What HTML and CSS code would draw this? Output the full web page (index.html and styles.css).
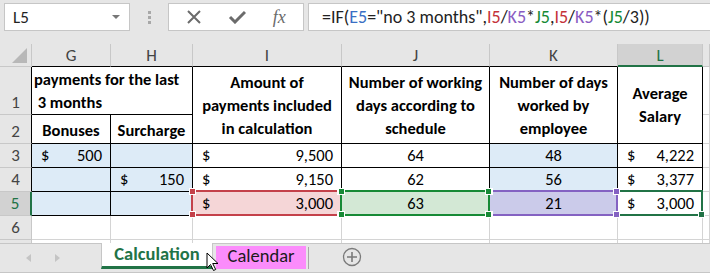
FILE: index.html
```html
<!DOCTYPE html>
<html lang="en">
<head>
  <meta charset="UTF-8" />
  <title>Average salary</title>
  <link rel="stylesheet" href="styles.css">
</head>
<body>

  <!-- formula bar -->
  <div class="toolbar">
    <div class="namebox">
      <span>L5</span>
      <svg class="dd" width="8" height="5" viewBox="0 0 8 5"><path d="M0 0h8L4 4z" fill="#777"/></svg>
    </div>
    <div class="grip"><i></i><i></i><i></i></div>
    <div class="fbtns">
      <svg width="16" height="16" viewBox="0 0 16 16"><path d="M2 2l12 12M14 2L2 14" stroke="#6b6b6b" stroke-width="2" fill="none"/></svg>
      <svg width="18" height="14" viewBox="0 0 18 14"><path d="M2 7l5 5L17 2" stroke="#6b6b6b" stroke-width="3" fill="none"/></svg>
      <span class="fx">fx</span>
    </div>
    <div class="finput">=IF(<span class="r-e">E5</span>="no 3 months",<span class="r-i">I5</span>/<span class="r-k">K5</span>*<span class="r-j">J5</span>,<span class="r-i">I5</span>/<span class="r-k">K5</span>*(<span class="r-j">J5</span>/3))</div>
  </div>

  <!-- sheet grid -->
  <div class="sheet">
    <div class="hd corner"><svg width="32" height="23" viewBox="0 0 32 23"><path d="M12 19L27 4v15z" fill="#b8b8b8"/></svg></div>
    <div class="hd col top">G</div>
    <div class="hd col top">H</div>
    <div class="hd col top">I</div>
    <div class="hd col top">J</div>
    <div class="hd col top">K</div>
    <div class="hd col on">L</div>
    <div class="hd col"></div>

    <div class="hd row edge">1</div>
    <div class="d span2 lines left-text">payments for the last<br>&nbsp;3 months</div>
    <div class="d tall title">Amount of<br>payments included<br>in calculation</div>
    <div class="d tall title">Number of working<br>days according to<br>schedule</div>
    <div class="d tall title">Number of days<br>worked by<br>employee</div>
    <div class="d tall title">Average<br>Salary</div>
    <div class="c"></div>

    <div class="hd row edge">2</div>
    <div class="d title low">Bonuses</div>
    <div class="d title low">Surcharge</div>
    <div class="c"></div>

    <div class="hd row edge">3</div>
    <div class="d blue acc"><span>$</span><span>500</span></div>
    <div class="d blue"></div>
    <div class="d acc"><span>$</span><span>9,500</span></div>
    <div class="d num">64</div>
    <div class="d blue num">48</div>
    <div class="d acc"><span>$</span><span>4,222</span></div>
    <div class="c"></div>

    <div class="hd row edge">4</div>
    <div class="d blue"></div>
    <div class="d blue acc"><span>$</span><span>150</span></div>
    <div class="d acc"><span>$</span><span>9,150</span></div>
    <div class="d num">62</div>
    <div class="d blue num">56</div>
    <div class="d acc"><span>$</span><span>3,377</span></div>
    <div class="c"></div>

    <div class="hd row edge on">5</div>
    <div class="d blue"></div>
    <div class="d blue"></div>
    <div class="d pink acc sel"><span>$</span><span>3,000</span>
      <b class="rng red"><i class="tl"></i><i class="tr"></i><i class="bl"></i><i class="br"></i></b>
    </div>
    <div class="d mint num sel">63
      <b class="rng green"><i class="tl"></i><i class="tr"></i><i class="bl"></i><i class="br"></i></b>
    </div>
    <div class="d lilac num sel">21
      <b class="rng purple"><i class="tl"></i><i class="tr"></i><i class="bl"></i><i class="br"></i></b>
    </div>
    <div class="d acc sel"><span>$</span><span>3,000</span>
      <b class="rng active"><i class="br"></i></b>
    </div>
    <div class="c"></div>

    <div class="hd row">6</div>
    <div class="c"></div>
    <div class="c"></div>
    <div class="c"></div>
    <div class="c"></div>
    <div class="c"></div>
    <div class="c"></div>
    <div class="c"></div>

    <div class="hd row"></div>
    <div class="c"></div>
    <div class="c"></div>
    <div class="c"></div>
    <div class="c"></div>
    <div class="c"></div>
    <div class="c"></div>
    <div class="c"></div>
  </div>

  <!-- sheet tabs -->
  <div class="tabbar">
    <div class="arrows">
      <svg width="6" height="8" viewBox="0 0 6 8"><path d="M5 0v8L0 4z" fill="#c4c4c4"/></svg>
      <svg width="6" height="8" viewBox="0 0 6 8"><path d="M1 0v8l5-4z" fill="#c4c4c4"/></svg>
    </div>
    <div class="tab active">Calculation</div>
    <div class="tab pinktab">Calendar</div>
    <div class="tabsep"></div>
    <svg class="addsheet" width="20" height="20" viewBox="0 0 20 20">
      <circle cx="10" cy="10" r="8.5" stroke="#7a7a7a" stroke-width="1.3" fill="none"/>
      <path d="M10 5v10M5 10h10" stroke="#7a7a7a" stroke-width="1.6"/>
    </svg>
    <svg class="cursor" width="13" height="20" viewBox="0 0 13 20">
      <path d="M1 1v15l3.5-3.5 3 6 2.2-1-3-6H12z" fill="#fff" stroke="#000" stroke-width="1"/>
    </svg>
  </div>

</body>
</html>
```

FILE: styles.css
```css
body {
  margin: 0;
  width: 710px;
  height: 275px;
  overflow: hidden;
  background: #fff;
  font-family: Carlito, Lato, "Liberation Sans", sans-serif;
  font-size: 16.5px;
  color: #000;
}

/* formula bar */
.toolbar {
  display: flex;
  align-items: flex-start;
  height: 44px;
  padding-top: 3px;
  box-sizing: border-box;
  background: #e6e6e6;
}

.namebox {
  display: flex;
  align-items: center;
  justify-content: space-between;
  margin-left: 4px;
  width: 126px;
  height: 28px;
  padding: 0 9px 0 8px;
  box-sizing: border-box;
  background: #fff;
  border: 1px solid #c6c6c6;
  color: #222;
  font-size: 17px;
}

.grip {
  width: 38px;
  height: 28px;
  display: flex;
  flex-direction: column;
  align-items: center;
  justify-content: center;
  gap: 2px;
}

.grip i {
  display: block;
  width: 3px;
  height: 3px;
  background: #a8a8a8;
}

.fbtns {
  display: flex;
  align-items: center;
  justify-content: space-around;
  width: 136px;
  height: 28px;
  padding: 0 4px;
  box-sizing: border-box;
  background: #fff;
  border: 1px solid #c6c6c6;
}

.fx {
  font-family: "Liberation Serif", serif;
  font-style: italic;
  font-size: 18px;
  color: #6b6b6b;
}

.finput {
  flex: 1;
  height: 28px;
  margin-left: 4px;
  padding-left: 13px;
  line-height: 26px;
  box-sizing: border-box;
  background: #fff;
  border: 1px solid #c6c6c6;
  border-right: none;
  color: #222;
  font-size: 18px;
  white-space: nowrap;
}

.r-e { color: #3a6fc4; }
.r-i { color: #c4323a; }
.r-k { color: #8a5cc2; }
.r-j { color: #168a36; }

/* sheet */
.sheet {
  display: grid;
  grid-template-columns: 32px 79px 82px 149px 148px 128px 85px 7px;
  grid-template-rows: 23px 48px 29px 24px 24px 24px 24px 24px;
  height: 199px;
  overflow: hidden;
  background: #fff;
}

.sheet > div {
  box-sizing: border-box;
  border-right: 1px solid #d4d4d4;
  border-bottom: 1px solid #d4d4d4;
  line-height: 23px;
}

.hd {
  background: #e6e6e6;
  color: #444;
  text-align: center;
  font-size: 17px;
}

.sheet > .hd {
  border-color: #c8c8c8;
}

.corner svg {
  display: block;
}

.col {
  line-height: 23px;
}

.sheet > .top {
  border-bottom-color: #000;
}

.sheet > .col.on {
  background: #d2d2d2;
  color: #217346;
  border-bottom: 2px solid #217346;
}

.row {
  display: flex;
  align-items: flex-end;
  justify-content: center;
}

.sheet > .edge {
  border-right-color: #000;
}

.sheet > .row.on {
  background: #d2d2d2;
  color: #217346;
  border-right: 2px solid #217346;
}

.sheet > .d {
  border-right-color: #000;
  border-bottom-color: #000;
}

.span2 {
  grid-column: span 2;
}

.tall {
  grid-row: span 2;
}

.title {
  display: flex;
  align-items: center;
  justify-content: center;
  text-align: center;
  font-weight: bold;
}

.low {
  align-items: flex-end;
  padding-bottom: 1px;
}

.left-text {
  display: flex;
  align-items: flex-end;
  padding-left: 2px;
  font-weight: bold;
}

.acc {
  display: flex;
  justify-content: space-between;
  align-items: flex-end;
  padding: 0 8px 0 9px;
}

.num {
  display: flex;
  align-items: flex-end;
  justify-content: center;
}

.blue { background: #ddebf7; }
.pink { background: #f5d6d7; }
.mint { background: #d3e8d5; }
.lilac { background: #cbcbea; }

/* coloured reference ranges drawn over row 5 */
.sel {
  position: relative;
}

.rng {
  position: absolute;
  top: -2px;
  left: -2px;
  right: -1px;
  bottom: -1px;
  border: 2px solid;
  z-index: 1;
}

.rng i {
  position: absolute;
  width: 5px;
  height: 5px;
  border: 1px solid #fff;
}

.rng .tl { left: -4px; top: -4px; }
.rng .tr { right: -4px; top: -4px; }
.rng .bl { left: -4px; bottom: -4px; }
.rng .br { right: -4px; bottom: -4px; }

.red { border-color: #c4414a; }
.red i { background: #c4414a; }
.green { border-color: #178a36; z-index: 3; }
.green i { background: #178a36; }
.purple { border-color: #8462c2; z-index: 2; }
.purple i { background: #8462c2; }
.active { border-color: #217346; }
.active i { background: #217346; }

/* sheet tabs */
.tabbar {
  position: relative;
  display: flex;
  align-items: flex-start;
  height: 30px;
  box-sizing: border-box;
  background: #e6e6e6;
  border-top: 1px solid #c6c6c6;
  border-bottom: 1px solid #c6c6c6;
}

.arrows {
  display: flex;
  gap: 22px;
  width: 101px;
  padding: 10px 0 0 26px;
  box-sizing: border-box;
}

.tab {
  box-sizing: border-box;
  text-align: center;
  font-size: 18.5px;
}

.tab.active {
  width: 112px;
  height: 26px;
  margin-top: -1px;
  background: #fff;
  border-left: 1px solid #c6c6c6;
  border-right: 1px solid #c6c6c6;
  border-bottom: 3px solid #217346;
  color: #217346;
  font-weight: bold;
  line-height: 22px;
}

.pinktab {
  width: 90px;
  height: 23px;
  margin: 2px 0 0 3px;
  background: #fb8cfb;
  color: #1a1a1a;
  line-height: 20px;
}

.tabsep {
  width: 1px;
  height: 22px;
  margin: 3px 0 0 2px;
  background: #a8a8a8;
}

.addsheet {
  margin: 3px 0 0 33px;
}

.cursor {
  position: absolute;
  left: 206px;
  top: 8px;
}
```
